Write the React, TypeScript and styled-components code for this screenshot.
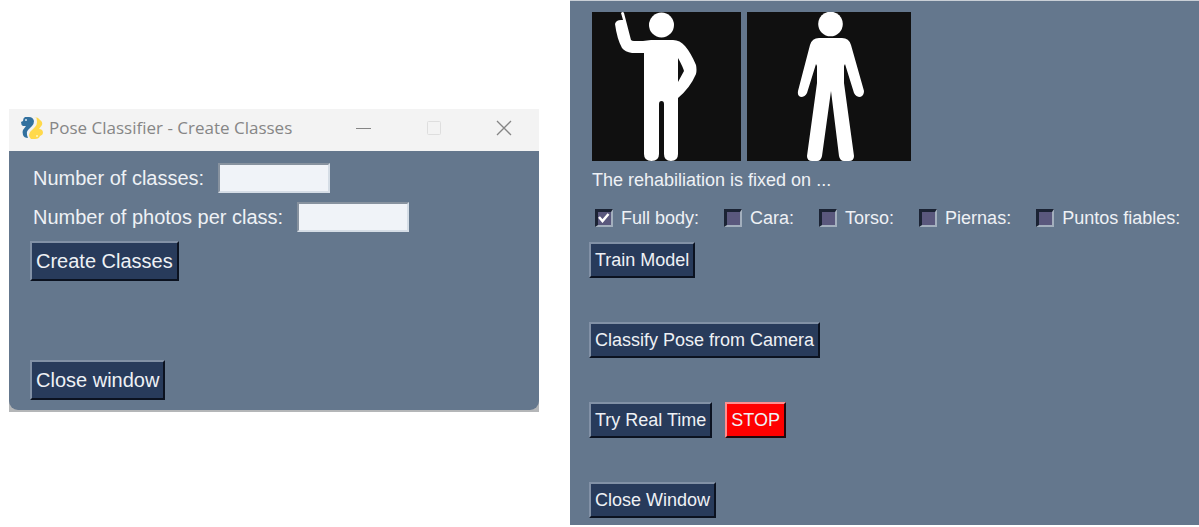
import React from 'react';
import styled, { createGlobalStyle } from 'styled-components';

const GlobalStyle = createGlobalStyle`
  *, *::before, *::after { box-sizing: border-box; }
  body {
    margin: 0;
    background: #ffffff;
    font-family: "Liberation Sans", Arial, sans-serif;
  }
`;

const slate = '#64778d';
const navy = '#283b5b';

const Page = styled.main`
  display: grid;
  grid-template-columns: minmax(0, 530fr) minmax(0, 629fr);
  align-items: start;
  gap: 31px;
  padding-left: 9px;
`;

const Window = styled.section`
  margin-top: 109px;
  background: #b4b6b8;
  padding-bottom: 2px;
`;

const TitleBar = styled.header`
  display: flex;
  align-items: center;
  height: 42px;
  padding: 0 20px 4px 11px;
  background: #f3f3f3;
`;

const Title = styled.h1`
  flex: 1;
  margin: 0 0 0 5px;
  font: 400 17px/24px "Open Sans", "Noto Sans", sans-serif;
  color: #868686;
  white-space: nowrap;
`;

const WindowControls = styled.div`
  display: flex;
  gap: 40px;
`;

const ControlButton = styled.button<{ $dim?: boolean }>`
  display: flex;
  align-items: center;
  justify-content: center;
  width: 30px;
  height: 24px;
  padding: 0;
  border: 0;
  background: none;
  color: ${(p) => (p.$dim ? '#dedede' : '#858585')};
`;

const WindowBody = styled.form`
  display: flex;
  flex-direction: column;
  align-items: flex-start;
  padding: 12px 21px 10px;
  background: ${slate};
  border-radius: 0 0 9px 9px;
`;

const Field = styled.div`
  display: flex;
  align-items: center;
  gap: 14px;
  margin: 0 0 9px 3px;
`;

const FieldLabel = styled.label`
  font-size: 20px;
  line-height: 30px;
  color: #eef1f5;
`;

const TextInput = styled.input`
  width: 112px;
  height: 30px;
  padding: 0 4px;
  border: 2px solid;
  border-color: #87929f #d5dde6 #d5dde6 #87929f;
  border-radius: 0;
  background: #f0f3f8;
  font: 20px "Liberation Sans", Arial, sans-serif;
`;

const Button = styled.button<{ $large?: boolean; $danger?: boolean }>`
  height: ${(p) => (p.$large ? 40 : 36)}px;
  padding: 0 4px;
  border: 2px solid;
  border-color: ${(p) =>
    p.$danger ? '#ff8f8f #20080c #20080c #ff8f8f' : '#8291a6 #0b1220 #0b1220 #8291a6'};
  border-radius: 0;
  background: ${(p) => (p.$danger ? '#ff0000' : navy)};
  color: #eef1f5;
  font: ${(p) => (p.$large ? 20 : 18)}px "Liberation Sans", Arial, sans-serif;
  white-space: nowrap;
`;

const LowerRow = styled.div`
  margin-top: 79px;
`;

const Panel = styled.form`
  display: flex;
  flex-direction: column;
  align-items: flex-start;
  padding: 11px 19px 7px;
  border-top: 1px solid #c9cfd6;
  background: ${slate};
`;

const Poses = styled.div`
  display: flex;
  gap: 6px;
  margin-left: 3px;
`;

const Pose = styled.svg`
  display: block;
  background: #101010;
`;

const Caption = styled.p`
  margin: 7px 0 0 3px;
  font-size: 18px;
  line-height: 24px;
  color: #eef1f5;
`;

const Checks = styled.div`
  display: flex;
  gap: 25px;
  margin: 14px 0 12px 6px;
`;

const CheckLabel = styled.label`
  position: relative;
  display: flex;
  align-items: center;
  gap: 8px;
  font-size: 18px;
  line-height: 24px;
  color: #eef1f5;
  white-space: nowrap;
`;

const CheckBox = styled.input`
  appearance: none;
  width: 18px;
  height: 18px;
  margin: 0;
  border: 3px solid;
  border-width: 3px 2px 2px 3px;
  border-color: #1b2334 #a3afbd #a3afbd #1b2334;
  background: #5a587d;

  & + svg {
    display: none;
  }
  &:checked + svg {
    display: block;
  }
`;

const Tick = styled.svg`
  position: absolute;
  left: 3px;
  top: 6px;
  pointer-events: none;
`;

const Actions = styled.div`
  display: flex;
  flex-direction: column;
  gap: 44px;
`;

const ActionRow = styled.div`
  display: flex;
  gap: 13px;
`;

function PythonLogo() {
  return (
    <svg width="24" height="24" viewBox="0 0 24 24" aria-hidden="true">
      <path
        d="M5 1h4q4 0 5 4 0 3-2 5l-4 4q-2 2-1 5l1 3q-4 0-5-3-1-3 0-5l3-4H3Q1 9 1 6l2-1q0-3 2-4Z"
        fill="#32719f"
      />
      <path
        d="M14 1q4 0 6 3 3 2 2 5l-3 4q4 0 4 4 0 2-3 3-1 3-5 3h-4q-2-2-2-4 0-3 3-5l3-3q2-2 2-5 0-3-1-5Z"
        fill="#ffd94b"
      />
      <circle cx="6" cy="4" r="1" fill="#d9e7f0" />
      <circle cx="17" cy="20" r="1" fill="#fff4c0" />
    </svg>
  );
}

function PointingFigure() {
  return (
    <Pose width="149" height="149" viewBox="0 0 149 149" role="img" aria-label="Raised arm pose">
      <g fill="#fff">
        <circle cx="69.500" cy="13" r="12.500" />
        <path d="M29 1q2-2 3 0l7 27q1 1 3 1h9l8-1h22q7 0 12 6 6 7 11 19 1 5 0 9-6 14-18 24v56q0 7-7 7t-7-7V92q0-3-2.500-3T67 92v50q0 7-7.500 7T52 142V41H40q-7-1-10-5-5-9-7-24 1-4 6-4h2ZM86 46v24l6-11q-1-4-6-13Z" />
      </g>
    </Pose>
  );
}

function StandingFigure() {
  return (
    <Pose width="164" height="149" viewBox="0 0 164 149" role="img" aria-label="Standing pose">
      <g fill="#fff">
        <circle cx="83.500" cy="12" r="12.300" />
        <path d="M72 26h23q7 0 9 7l13 46q0 5-4 6-4 0-6-4L98 52l-1 2v17l10 73q0 5-5 5h-5q-4 0-5-5L84 79l-9 65q-1 5-5 5h-5q-5 0-5-5l10-73V54l-1-2-9 29q-2 4-6 4-4-1-3-6l12-46q2-7 9-7Z" />
      </g>
    </Pose>
  );
}

const bodyParts = [
  { id: 'full-body', label: 'Full body:', checked: true },
  { id: 'cara', label: 'Cara:', checked: false },
  { id: 'torso', label: 'Torso:', checked: false },
  { id: 'piernas', label: 'Piernas:', checked: false },
  { id: 'puntos', label: 'Puntos fiables:', checked: false },
];

export default function App() {
  return (
    <>
      <GlobalStyle />
      <Page>
        <Window>
          <TitleBar>
            <PythonLogo />
            <Title>Pose Classifier - Create Classes</Title>
            <WindowControls>
              <ControlButton type="button" aria-label="Minimize">
                <svg width="16" height="16" viewBox="0 0 16 16" stroke="currentColor">
                  <path d="M0 8.500h15" />
                </svg>
              </ControlButton>
              <ControlButton type="button" aria-label="Maximize" $dim>
                <svg width="16" height="16" viewBox="0 0 16 16" fill="none" stroke="currentColor">
                  <rect x="1.500" y="1.500" width="13" height="13" rx="1" />
                </svg>
              </ControlButton>
              <ControlButton type="button" aria-label="Close">
                <svg width="16" height="16" viewBox="0 0 16 16" stroke="currentColor" strokeWidth="1.300">
                  <path d="M1 1l14 14M15 1L1 15" />
                </svg>
              </ControlButton>
            </WindowControls>
          </TitleBar>
          <WindowBody>
            <Field>
              <FieldLabel htmlFor="class-count">Number of classes:</FieldLabel>
              <TextInput id="class-count" type="text" />
            </Field>
            <Field>
              <FieldLabel htmlFor="photo-count">Number of photos per class:</FieldLabel>
              <TextInput id="photo-count" type="text" />
            </Field>
            <Button type="button" $large>Create Classes</Button>
            <LowerRow>
              <Button type="button" $large>Close window</Button>
            </LowerRow>
          </WindowBody>
        </Window>
        <Panel>
          <Poses>
            <PointingFigure />
            <StandingFigure />
          </Poses>
          <Caption>The rehabiliation is fixed on ...</Caption>
          <Checks>
            {bodyParts.map((part) => (
              <CheckLabel key={part.id} htmlFor={part.id}>
                <CheckBox id={part.id} type="checkbox" defaultChecked={part.checked} />
                <Tick width="12" height="12" viewBox="0 0 12 12" fill="none" stroke="#fff" strokeWidth="2.500">
                  <path d="M1 5l3.500 4L10.500 2" />
                </Tick>
                {part.label}
              </CheckLabel>
            ))}
          </Checks>
          <Actions>
            <ActionRow>
              <Button type="button">Train Model</Button>
            </ActionRow>
            <ActionRow>
              <Button type="button">Classify Pose from Camera</Button>
            </ActionRow>
            <ActionRow>
              <Button type="button">Try Real Time</Button>
              <Button type="button" $danger>STOP</Button>
            </ActionRow>
            <ActionRow>
              <Button type="button">Close Window</Button>
            </ActionRow>
          </Actions>
        </Panel>
      </Page>
    </>
  );
}
